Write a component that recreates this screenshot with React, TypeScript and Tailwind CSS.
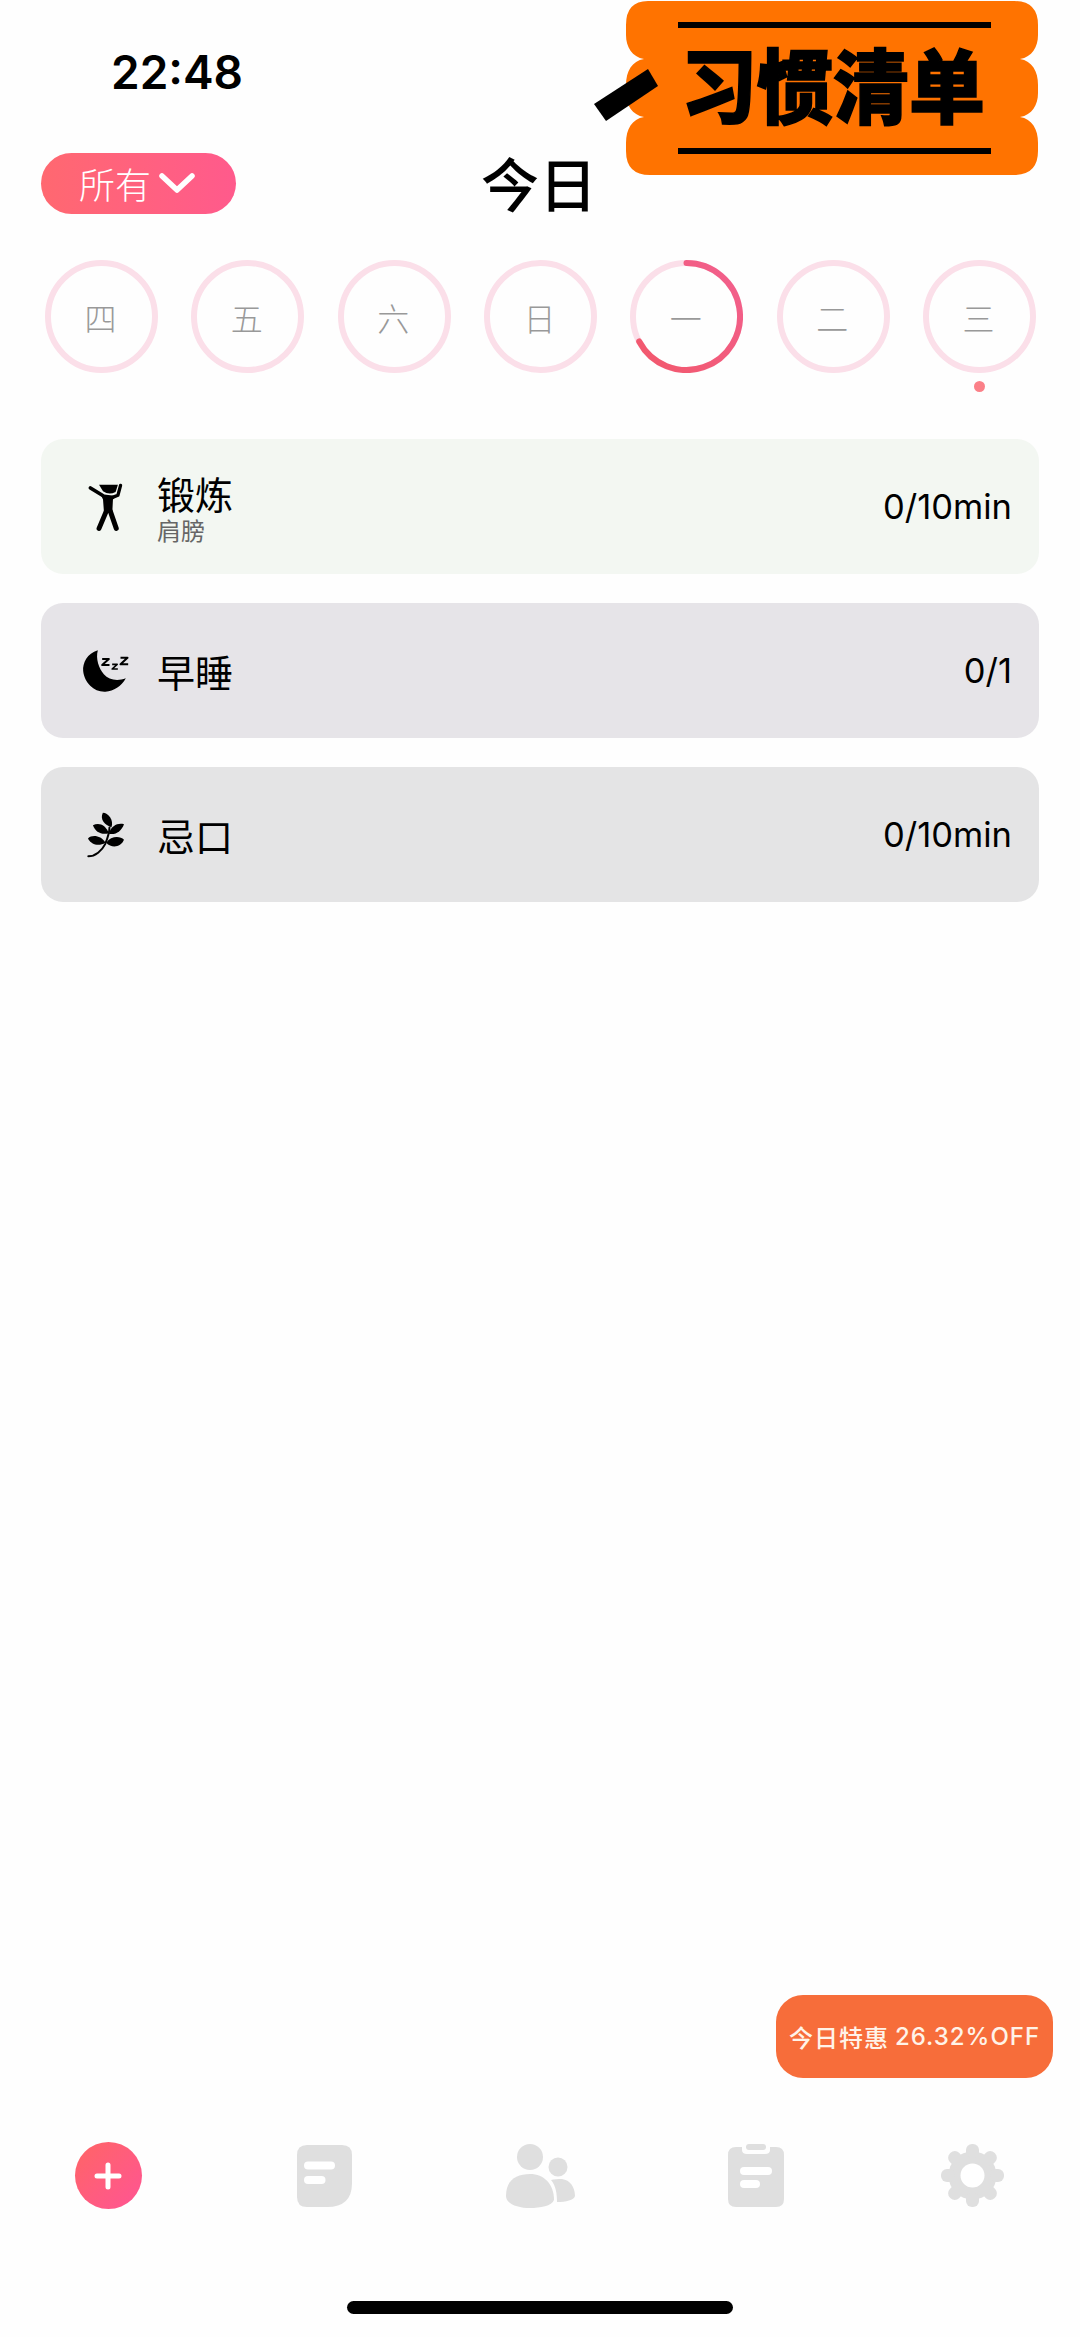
import React from "react";

const days = ["四", "五", "六", "日", "一", "二", "三"];

function Ring({ progress }: { progress?: boolean }) {
  return (
    <svg width="113" height="113" viewBox="0 0 113 113" className="absolute inset-0">
      <defs>
        <linearGradient id="ringG" x1="1" y1="0" x2="0" y2="1">
          <stop offset="0" stopColor="#f2608e" />
          <stop offset="1" stopColor="#f2586c" />
        </linearGradient>
      </defs>
      <circle cx="56.5" cy="56.5" r="53.5" fill="none" stroke="#fbdfe9" strokeWidth="6" />
      {progress && (
        <path
          d="M56.5 3 A53.5 53.5 0 1 1 9.2 81.5"
          fill="none"
          stroke="url(#ringG)"
          strokeWidth="6"
          strokeLinecap="round"
        />
      )}
    </svg>
  );
}

function BodyIcon() {
  return (
    <svg width="35" height="48" viewBox="55 35 105 145">
      <path d="M88 40 H145 L138 62 Q118 72 100 60 Z" fill="#000" />
      <path d="M62 50 L98 72" fill="none" stroke="#000" strokeWidth="11" strokeLinecap="round" />
      <path d="M153 42 L145 72 L125 80" fill="none" stroke="#000" strokeWidth="10" strokeLinecap="round" strokeLinejoin="round" />
      <path d="M92 68 L140 74 L130 85 L128 125 L103 125 L100 85 Z" fill="#000" />
      <path d="M110 120 L88 172 M122 120 L140 172" fill="none" stroke="#000" strokeWidth="15" strokeLinecap="round" />
    </svg>
  );
}

function MoonIcon() {
  return (
    <svg width="47" height="44" viewBox="35 42 140 132">
      <path d="M82 46 C50 55 36 85 38 108 C42 145 72 172 105 170 C130 168 152 155 166 130 C140 140 115 135 100 118 C85 100 75 72 82 46 Z" fill="#000" />
      <path d="M95 72 H115 L95 90 H117" fill="none" stroke="#000" strokeWidth="6" strokeLinejoin="round" />
      <path d="M125 88 H140 L125 102 H142" fill="none" stroke="#000" strokeWidth="5" strokeLinejoin="round" />
      <path d="M150 68 H171 L150 88 H173" fill="none" stroke="#000" strokeWidth="6" strokeLinejoin="round" />
    </svg>
  );
}

function LeafIcon() {
  return (
    <svg width="38" height="48" viewBox="50 35 115 145">
      <path d="M54 172 C75 172 95 155 105 135 C112 118 118 100 118 85" fill="none" stroke="#000" strokeWidth="6" strokeLinecap="round" />
      <path d="M98 40 C114 40 132 62 124 84 C104 78 88 60 98 40 Z" fill="#000" />
      <path d="M68 78 C85 68 107 76 116 102 C95 108 76 100 68 78 Z" fill="#000" />
      <path d="M162 75 C145 70 123 78 116 104 C138 108 154 96 162 75 Z" fill="#000" />
      <path d="M53 118 C65 106 92 108 106 131 C85 143 63 137 53 118 Z" fill="#000" />
      <path d="M162 122 C150 110 123 110 108 131 C125 149 152 145 162 122 Z" fill="#000" />
    </svg>
  );
}

function PlusIcon() {
  return (
    <div className="w-[67px] h-[67px] rounded-full bg-gradient-to-br from-[#ff6464] to-[#ff5493] flex items-center justify-center">
      <svg width="28" height="28" viewBox="0 0 28 28">
        <path d="M14 3 V25 M3 14 H25" stroke="#fff" strokeWidth="5" strokeLinecap="round" />
      </svg>
    </div>
  );
}

function NoteIcon() {
  return (
    <svg width="55" height="62" viewBox="0 0 55 62">
      <path d="M10 0 H45 Q55 0 55 10 V38 Q55 62 30 62 H10 Q0 62 0 52 V10 Q0 0 10 0 Z" fill="#dfdfdf" />
      <rect x="7" y="16.5" width="31" height="8" rx="4" fill="#fff" />
      <rect x="7" y="31" width="21.5" height="8" rx="4" fill="#fff" />
    </svg>
  );
}

function UsersIcon() {
  return (
    <svg width="69" height="64" viewBox="0 0 69 64">
      <ellipse cx="24" cy="13" rx="13" ry="13" fill="#dfdfdf" />
      <path d="M0 52 C0 36 10 30 24 30 C38 30 48 40 48 56 C46 62 34 64 24 64 C12 64 0 60 0 52 Z" fill="#dfdfdf" />
      <circle cx="52" cy="23" r="9.5" fill="#dfdfdf" />
      <path d="M45 36 C48 35 52 35 56 35 C64 36 69 43 69 52 C68 56 60 58 51 58 C51 50 50 42 45 36 Z" fill="#dfdfdf" />
    </svg>
  );
}

function ClipIcon() {
  return (
    <svg width="56" height="63" viewBox="0 0 56 63">
      <path d="M8 3 H14 V6 Q14 10 19 10 H37 Q42 10 42 6 V3 H48 Q56 3 56 11 V55 Q56 63 48 63 H8 Q0 63 0 55 V11 Q0 3 8 3 Z" fill="#dfdfdf" />
      <rect x="18" y="0" width="20" height="6" rx="3" fill="#dfdfdf" />
      <rect x="12" y="23" width="32" height="8" rx="4" fill="#fff" />
      <rect x="12" y="36" width="20" height="8" rx="4" fill="#fff" />
    </svg>
  );
}

function GearIcon() {
  return (
    <svg width="63" height="63" viewBox="0 0 63 63">
      <circle cx="31.5" cy="31.5" r="24" fill="#dfdfdf" />
      {[0, 45, 90, 135, 180, 225, 270, 315].map((a) => (
        <rect key={a} x="25" y="0" width="13" height="14" rx="6" fill="#dfdfdf" transform={`rotate(${a} 31.5 31.5)`} />
      ))}
      <circle cx="31.5" cy="31.5" r="12" fill="#fff" />
    </svg>
  );
}

function Banner() {
  return (
    <div className="absolute left-[594px] top-[1px] w-[444px] h-[174px]">
      <svg width="444" height="174" viewBox="0 0 444 174" className="absolute inset-0">
        <path
          d="M54 0 H420 Q444 0 444 24 V34 C444 46 438 56 426 58 C438 60 444 70 444 84 V92 C444 104 438 114 426 116 C438 118 444 128 444 142 V150 Q444 174 420 174 H56 Q32 174 32 150 V142 C32 128 38 118 50 116 C38 114 32 104 32 92 V84 C32 70 38 60 50 58 C38 56 32 46 32 34 V24 Q32 0 54 0 Z"
          fill="#ff7300"
        />
        <rect x="84" y="21" width="313" height="6" fill="#000" />
        <rect x="84" y="147" width="313" height="6" fill="#000" />
        <path d="M0 103 L54 68 L64 85 L12 120 Z" fill="#000" />
      </svg>
      <div className="absolute left-[90px] top-[35px] w-[298px] flex justify-center text-black font-black text-[76px] leading-[92px] scale-y-[1.06] whitespace-nowrap [-webkit-text-stroke:1.5px_#000] font-['Noto_Sans_CJK_SC',sans-serif]">
        习惯清单
      </div>
    </div>
  );
}

const cards = [
  { icon: <BodyIcon />, title: "锻炼", sub: "肩膀", val: "0/10min", bg: "bg-[#f3f7f2]" },
  { icon: <MoonIcon />, title: "早睡", val: "0/1", bg: "bg-[#e6e4e8]" },
  { icon: <LeafIcon />, title: "忌口", val: "0/10min", bg: "bg-[#e4e4e5]" },
];

export default function App() {
  return (
    <div className="relative w-[1080px] h-[2337px] bg-[#fefefe] flex flex-col overflow-hidden font-['Noto_Sans_CJK_SC',sans-serif] text-black">
      <Banner />
      <div className="h-[152px] pl-[111px] pt-[44px]">
        <div className="font-['Inter',sans-serif] font-semibold text-[46px] leading-[56px]">22:48</div>
      </div>

      <div className="grid grid-cols-[1fr_auto_1fr] items-center px-[41px] h-[62px]">
        <div className="justify-self-start w-[195px] h-[61px] rounded-full bg-gradient-to-r from-[#ff6870] to-[#ff5a8c] flex items-center pl-[38px] gap-[8px]">
          <span className="text-white text-[36px] leading-[61px] font-light">所有</span>
          <svg width="36" height="20" viewBox="0 0 36 20">
            <path d="M3 3 L18 17 L33 3" fill="none" stroke="#fff" strokeWidth="5.5" strokeLinecap="round" strokeLinejoin="round" />
          </svg>
        </div>
        <div className="text-[58px] leading-[62px] font-medium -translate-x-[1px] -translate-y-[1px]">今日</div>
        <div />
      </div>

      <div className="flex justify-between pl-[45px] pr-[44px] mt-[46px]">
        {days.map((d, i) => (
          <div key={d} className="flex flex-col items-center w-[113px]">
            <div className="relative w-[113px] h-[113px] flex items-center justify-center">
              <Ring progress={i === 4} />
              <span className="text-[#999999] text-[32px] font-light leading-none -translate-x-[1px]">{d}</span>
            </div>
            <div className={i === 6 ? "w-[11px] h-[11px] rounded-full bg-[#fb8088] mt-[8px]" : "h-[11px] mt-[8px]"} />
          </div>
        ))}
      </div>

      <div className="flex flex-col gap-[29px] px-[41px] mt-[47px]">
        {cards.map((c) => (
          <div key={c.title} className={`${c.bg} h-[135px] rounded-[22px] flex items-center`}>
            <div className="w-[116px] pl-[13px] flex justify-center shrink-0">{c.icon}</div>
            <div className="flex flex-col flex-1">
              <div className="text-[38px] leading-[44px]">{c.title}</div>
              {c.sub && <div className="text-[24px] leading-[24px] text-[#666] mt-[3px]">{c.sub}</div>}
            </div>
            <div className="font-['Inter',sans-serif] text-[34.5px] pr-[27px]">{c.val}</div>
          </div>
        ))}
      </div>

      <div className="flex-1" />

      <div className="self-end mr-[27px] w-[277px] h-[83px] rounded-[27px] bg-[#f76d3a] flex items-center justify-center text-[#fff3e8] text-[24px] font-medium tracking-[1px] whitespace-nowrap font-['Inter','Noto_Sans_CJK_SC',sans-serif]">
        <span className="font-['Noto_Sans_CJK_SC',sans-serif]">今日特惠</span>
        <span className="ml-[6px]">26.32%OFF</span>
      </div>

      <div className="grid grid-cols-5 items-center justify-items-center mt-[64px] h-[67px]">
        <PlusIcon />
        <NoteIcon />
        <UsersIcon />
        <ClipIcon />
        <GearIcon />
      </div>

      <div className="flex justify-center mt-[92px] mb-[23px]">
        <div className="w-[386px] h-[13px] rounded-full bg-black" />
      </div>
    </div>
  );
}
